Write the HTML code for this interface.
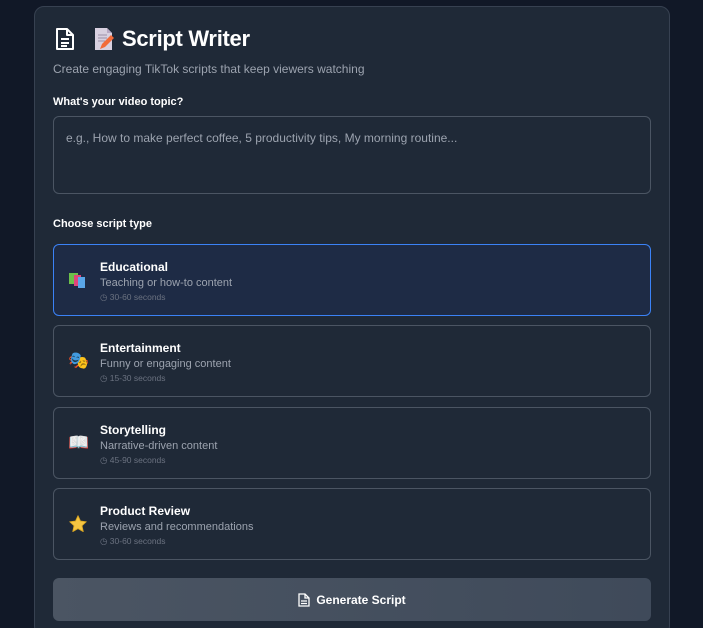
<!DOCTYPE html>
<html><head><style>
*{box-sizing:border-box;margin:0;padding:0}
html,body{width:703px;height:628px;overflow:hidden}
body{background:#111827;font-family:"Liberation Sans","Noto Sans CJK SC",sans-serif;color:#fff;position:relative}
.wrap{position:absolute;left:34px;top:6px;width:636px;height:630px;background:#1f2937;border:1px solid #374151;border-radius:10px}
.abs{position:absolute}
h1{position:absolute;left:87px;top:19px;font-size:22px;font-weight:bold;letter-spacing:-0.3px}
.sub{left:18px;top:55px;font-size:12px;color:#9ca3af}
.lbl{font-size:11px;font-weight:bold;color:#fff}
.ta{left:18px;top:109px;width:598px;height:78px;border:1px solid #4b5563;border-radius:6px;padding:14px 12px;font-size:12px;color:#9ca3af;background:#1f2937}
.card{position:absolute;left:18px;width:598px;height:72px;border:1px solid #4b5563;border-radius:6px;background:#1f2937}
.card.sel{border-color:#3b82f6;background:#1e2b45}
.ic{position:absolute;left:14px;top:26px;font-size:17px;line-height:18px;font-family:"DejaVu Sans",sans-serif}
.t{position:absolute;left:46px;top:15px;font-size:12px;font-weight:bold}
.d{position:absolute;left:46px;top:32px;font-size:11px;color:#9ca3af}
.s{position:absolute;left:46px;top:47px;font-size:8.5px;color:#6b7280}
.btn{left:18px;top:571px;width:598px;height:43px;border-radius:6px;background:linear-gradient(90deg,#4b5563,#3f4a5a);display:flex;align-items:center;justify-content:center;font-size:12px;font-weight:bold;gap:6px}
</style></head><body>
<div class="wrap">
<svg class="abs" style="left:19px;top:20px" width="22" height="24" viewBox="0 0 22 24" fill="none" stroke="#fff" stroke-width="2" stroke-linejoin="round"><path d="M3 2h10l6 6v14H3z"/><path d="M13 2v6h6"/><path d="M7 12h8M7 16h8M7 19h6"/></svg>
<svg class="abs" style="left:58px;top:20px" width="22" height="24" viewBox="0 0 22 24"><path d="M2 1h12l5 5v17H2z" fill="#d8d0e0"/><path d="M14 1v5h5" fill="#b7a9c4"/><path d="M5 8h9M5 11h9M5 14h7" stroke="#9c8fa8"/><path d="M7 22l2-5 9-9 3 3-9 9z" fill="#f26b3a"/></svg>
<h1>Script Writer</h1>
<div class="abs sub">Create engaging TikTok scripts that keep viewers watching</div>
<div class="abs lbl" style="left:18px;top:89px">What's your video topic?</div>
<div class="abs ta">e.g., How to make perfect coffee, 5 productivity tips, My morning routine...</div>
<div class="abs lbl" style="left:18px;top:211px">Choose script type</div>
<div class="card sel" style="top:237px"><div class="ic"><svg width="18" height="18"><rect x="1" y="2" width="9" height="11" fill="#6cc04a"/><rect x="6" y="4" width="7" height="11" fill="#e0457b"/><rect x="10" y="6" width="7" height="11" fill="#5aa6e8"/></svg></div><div class="t">Educational</div><div class="d">Teaching or how-to content</div><div class="s">◷ 30-60 seconds</div></div>
<div class="card" style="top:318px"><div class="ic">🎭</div><div class="t">Entertainment</div><div class="d">Funny or engaging content</div><div class="s">◷ 15-30 seconds</div></div>
<div class="card" style="top:400px"><div class="ic">📖</div><div class="t">Storytelling</div><div class="d">Narrative-driven content</div><div class="s">◷ 45-90 seconds</div></div>
<div class="card" style="top:481px"><div class="ic" style="left:14px;top:25px"><svg width="20" height="20" viewBox="0 0 24 24"><path d="M12 2l3 6.5 7 .8-5.2 4.8 1.5 7L12 17.6 5.7 21.1l1.5-7L2 9.3l7-.8z" fill="#f5c542" stroke="#d9a520" stroke-width="1" stroke-linejoin="round"/></svg></div><div class="t">Product Review</div><div class="d">Reviews and recommendations</div><div class="s">◷ 30-60 seconds</div></div>
<div class="abs btn"><svg width="12" height="14" viewBox="0 0 12 14" fill="none" stroke="#fff" stroke-width="1.3"><path d="M1 1h6l4 4v8H1z"/><path d="M7 1v4h4M3 8h6M3 10.5h6"/></svg>Generate Script</div>
</div>
</body></html>
